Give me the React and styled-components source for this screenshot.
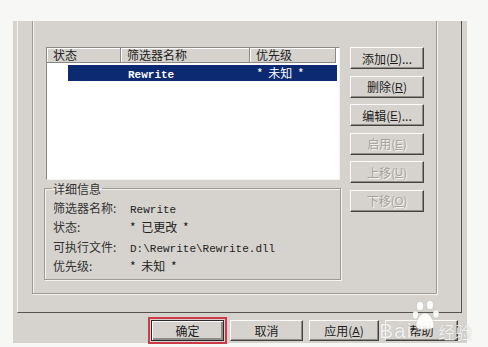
import React from "react"
import styled, { createGlobalStyle, css } from "styled-components"

const GlobalStyle = createGlobalStyle`
  body {
    margin: 0;
    background: #f7f7f6;
    font-family: "Noto Sans CJK SC", "Liberation Sans", sans-serif;
  }
`

const gray = "#d6d3ce"

const Page = styled.div`
  position: relative;
  width: 488px;
  height: 347px;
  overflow: hidden;
  padding: 21px 0 0 13px;
  box-sizing: border-box;
`

const Window = styled.div`
  width: 454px;
  height: 322px;
  background: ${gray};
  padding: 0 5px 0 4px;
  box-sizing: border-box;
  display: flex;
  flex-direction: column;
`

const TabFrame = styled.div`
  height: 292px;
  border-left: 1px solid #f4f3f0;
  border-right: 1px solid #55534f;
  border-bottom: 1px solid #55534f;
  padding: 0 24px 18px 14px;
  box-sizing: border-box;
  display: flex;
`

const Panel = styled.div`
  flex: 1;
  border-left: 1px solid #9c9a95;
  border-right: 1px solid #9c9a95;
  border-bottom: 1px solid #9c9a95;
  box-shadow: 1px 1px 0 #f4f3f0, inset 1px 0 0 #f4f3f0;
  padding: 26px 12px 0 11px;
  display: flex;
  gap: 9px;
`

const LeftColumn = styled.div`
  width: 297px;
  display: flex;
  flex-direction: column;
`

const ListView = styled.div`
  height: 133px;
  margin: 0 1px 0 2px;
  background: #fff;
  border: 1px solid #8a8884;
  border-right-color: #f4f3f0;
  border-bottom-color: #f4f3f0;
  box-sizing: border-box;
`

const Header = styled.div`
  display: flex;
  height: 15px;
`

const HeaderCell = styled.div`
  width: ${p => p.$w}px;
  flex: none;
  box-sizing: border-box;
  background: ${gray};
  border-right: 1px solid #8a8884;
  border-bottom: 1px solid #8a8884;
  box-shadow: inset 1px 1px 0 #fff;
  padding-left: 6px;
  font-size: 12px;
  line-height: 14px;
  color: #222;
  white-space: nowrap;
`

const Row = styled.div`
  display: flex;
  width: 269px;
  height: 16px;
  margin: 2px 0 0 21px;
  background: ${p => (p.$selected ? "#0c2a72" : "transparent")};
  color: ${p => (p.$selected ? "#fff" : "#111")};
`

const Cell = styled.div`
  width: ${p => p.$w}px;
  flex: none;
  padding-left: ${p => p.$pad || 0}px;
  box-sizing: border-box;
  font-size: 12px;
  line-height: 16px;
  white-space: nowrap;
`

const Mono = styled.span`
  font-family: "Liberation Mono", "DejaVu Sans Mono", monospace;
  font-size: 11px;
  font-weight: ${p => (p.$bold ? 700 : 400)};
`

const Stars = styled.span`
  word-spacing: 3px;
`

const GroupBox = styled.fieldset`
  margin: 1px 0 0 0;
  padding: 2px 0 0 8px;
  height: 99px;
  box-sizing: border-box;
  border: 1px solid #9c9a95;
  box-shadow: 1px 1px 0 #f4f3f0, inset 1px 1px 0 #f4f3f0;
`

const Legend = styled.legend`
  padding: 0 1px;
  margin-left: -1px;
  font-size: 12px;
  line-height: 15px;
  color: #333;
`

const InfoGrid = styled.div`
  display: grid;
  grid-template-columns: 77px 1fr;
  grid-auto-rows: 19.3px;
  align-items: center;
  font-size: 12px;
  color: #222;
`

const Label = styled.div`
  color: #333;
  white-space: nowrap;
`

const Value = styled.div`
  white-space: nowrap;
`

const ButtonColumn = styled.div`
  display: flex;
  flex-direction: column;
  gap: 6.6px;
`

const Button = styled.button`
  width: ${p => p.$w || 74}px;
  height: ${p => p.$h || 22}px;
  padding: 0;
  flex: none;
  background: ${gray};
  border: 1px solid;
  border-color: #fbfaf8 #45433f #45433f #fbfaf8;
  box-shadow: inset -1px -1px 0 #8e8c88;
  font-family: "Noto Sans CJK SC", sans-serif;
  font-size: 12px;
  color: #1c1c1c;
  display: flex;
  align-items: center;
  justify-content: center;
  white-space: nowrap;

  &:disabled {
    color: #a4a19c;
    text-shadow: 1px 1px 0 #f4f3f0;
  }

  ${p =>
    p.$marked &&
    css`
      outline: 2px solid #d03a48;
      outline-offset: 1px;
      border-color: #2a2a2a;
      box-shadow: inset 1px 1px 0 #fbfaf8, inset -2px -2px 0 #8e8c88;
    `}
`

const Key = styled.span`
  text-decoration: underline;
  font-family: "Liberation Sans", sans-serif;
  font-size: 11px;
`

const Footer = styled.div`
  display: flex;
  gap: 6px;
  padding: 7px 0 0 134px;
`

const Watermark = styled.div`
  position: absolute;
  left: 379px;
  top: 300px;
  display: flex;
  align-items: flex-end;
  color: rgba(255, 255, 255, 0.85);
  text-shadow: 0 0 1px rgba(120, 120, 120, 0.5);
  pointer-events: none;
`

const Bai = styled.span`
  font-family: "Liberation Sans", sans-serif;
  font-size: 21px;
  letter-spacing: 1px;
  line-height: 22px;
`

const Jingyan = styled.span`
  font-size: 17px;
  line-height: 20px;
  margin-left: -2px;
`

const Paw = () => (
  <svg width="28" height="36" viewBox="0 0 28 36" style={{ marginBottom: 6 }}>
    <g fill="rgba(255,255,255,0.9)" stroke="rgba(140,140,140,0.4)" strokeWidth="0.6">
      <ellipse cx="8" cy="6" rx="3.5" ry="4.5" />
      <ellipse cx="18" cy="5" rx="3.5" ry="4.5" />
      <ellipse cx="3.5" cy="15" rx="3" ry="4" />
      <ellipse cx="24" cy="14" rx="3" ry="4" />
      <path d="M13 13c-5 0-9 8-9 12 0 4 4 5 9 4 5 1 9 0 9-4 0-4-4-12-9-12z" />
    </g>
  </svg>
)

const sideButtons = [
  { text: "添加", key: "D", more: true },
  { text: "删除", key: "R" },
  { text: "编辑", key: "E", more: true },
  { text: "启用", key: "E", disabled: true },
  { text: "上移", key: "U", disabled: true },
  { text: "下移", key: "O", disabled: true },
]

const details = [
  ["筛选器名称:", <Mono>Rewrite</Mono>],
  ["状态:", <Stars>* 已更改 *</Stars>],
  ["可执行文件:", <Mono>D:\Rewrite\Rewrite.dll</Mono>],
  ["优先级:", <Stars>* 未知 *</Stars>],
]

const App = () => {
  return (
    <Page>
      <GlobalStyle />
      <Window>
        <TabFrame>
          <Panel>
            <LeftColumn>
              <ListView>
                <Header>
                  <HeaderCell $w={74}>状态</HeaderCell>
                  <HeaderCell $w={129}>筛选器名称</HeaderCell>
                  <HeaderCell $w={86}>优先级</HeaderCell>
                </Header>
                <Row $selected>
                  <Cell $w={53} />
                  <Cell $w={129} $pad={7}>
                    <Mono $bold>Rewrite</Mono>
                  </Cell>
                  <Cell $w={87} $pad={7}>
                    <Stars>* 未知 *</Stars>
                  </Cell>
                </Row>
              </ListView>
              <GroupBox>
                <Legend>详细信息</Legend>
                <InfoGrid>
                  {details.map(([label, value]) => (
                    <React.Fragment key={label}>
                      <Label>{label}</Label>
                      <Value>{value}</Value>
                    </React.Fragment>
                  ))}
                </InfoGrid>
              </GroupBox>
            </LeftColumn>
            <ButtonColumn>
              {sideButtons.map(b => (
                <Button key={b.text} disabled={b.disabled}>
                  {b.text}(<Key>{b.key}</Key>){b.more ? "..." : ""}
                </Button>
              ))}
            </ButtonColumn>
          </Panel>
        </TabFrame>
        <Footer>
          <Button $w={73} $h={21} $marked>确定</Button>
          <Button $w={73} $h={21}>取消</Button>
          <Button $w={70} $h={21}>
            应用(<Key>A</Key>)
          </Button>
          <Button $w={73} $h={21}>帮助</Button>
        </Footer>
      </Window>
      <Watermark>
        <Bai>Bai</Bai>
        <Paw />
        <Jingyan>经验</Jingyan>
      </Watermark>
    </Page>
  )
}

export default App
